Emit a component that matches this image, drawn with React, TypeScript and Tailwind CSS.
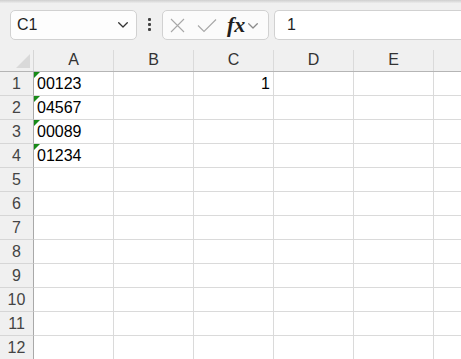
import React from "react";

const cols = ["A", "B", "C", "D", "E"];
const rows = Array.from({ length: 12 }, (_, i) => i + 1);

const cellData: Record<string, { value: string; align: "left" | "right"; flag?: boolean }> = {
  A1: { value: "00123", align: "left", flag: true },
  A2: { value: "04567", align: "left", flag: true },
  A3: { value: "00089", align: "left", flag: true },
  A4: { value: "01234", align: "left", flag: true },
  C1: { value: "1", align: "right" },
};

function Chevron({ className, color }: { className: string; color: string }) {
  return (
    <svg className={className} viewBox="0 0 10 6" fill="none">
      <path d="M0.7 0.7 L5 5 L9.3 0.7" stroke={color} strokeWidth="1.3" strokeLinecap="round" strokeLinejoin="round" />
    </svg>
  );
}

function FormulaBar() {
  return (
    <div className="flex h-[45px] items-start pt-[7px] pl-[10px]">
      {/* Name box */}
      <div className="flex h-[30px] w-[127px] items-center justify-between rounded-[5px] border border-[#d1d1d1] bg-[#fdfdfd] pl-[6px] pr-[8px]">
        <span className="text-[16px] text-[#1f1f1f]">C1</span>
        <Chevron className="h-[6px] w-[10px]" color="#333333" />
      </div>

      {/* Kebab */}
      <div className="flex w-[25px] flex-col items-center gap-[2px] pt-[8px]">
        <span className="h-[3px] w-[3px] rounded-[1px] bg-[#444]" />
        <span className="h-[3px] w-[3px] rounded-[1px] bg-[#444]" />
        <span className="h-[3px] w-[3px] rounded-[1px] bg-[#444]" />
      </div>

      {/* Cancel / Enter / fx */}
      <div className="flex h-[30px] w-[107px] items-center rounded-[5px] border border-[#d1d1d1] bg-[#fbfbfb] pl-[7px]">
        <svg className="h-[15px] w-[15px]" viewBox="0 0 15 15" fill="none">
          <path d="M1 1 L14 14 M14 1 L1 14" stroke="#a8a8a8" strokeWidth="1.1" />
        </svg>
        <svg className="ml-[12px] h-[15px] w-[20px]" viewBox="0 0 20 15" fill="none">
          <path d="M1 7.5 L7 13.5 L19 1.5" stroke="#a8a8a8" strokeWidth="1.1" />
        </svg>
        <span
          className="ml-[10px] text-[22px] leading-none font-semibold italic text-[#1f1f1f]"
          style={{ fontFamily: '"Liberation Serif", "DejaVu Serif", serif' }}
        >
          fx
        </span>
        <Chevron className="ml-[3px] mt-[2px] h-[6px] w-[10px]" color="#8a8a8a" />
      </div>

      {/* Formula input */}
      <div className="ml-[5px] flex h-[30px] flex-1 items-center rounded-l-[5px] border border-r-0 border-[#d1d1d1] bg-white pl-[12px]">
        <span className="text-[16px] text-[#1f1f1f]">1</span>
      </div>
    </div>
  );
}

function HeaderRow() {
  return (
    <div className="flex h-[24px] border-b border-[#b5b5b5] bg-[#f0f0f0]">
      <div className="flex w-[34px] shrink-0">
        <div className="flex flex-1 items-end justify-end pb-[3px] pr-[3px]">
          <svg className="h-[14px] w-[14px]" viewBox="0 0 14 14">
            <path d="M14 0 L14 14 L0 14 Z" fill="#d9d9d9" />
          </svg>
        </div>
        <div className="mt-[2px] w-px bg-[#d6d6d6]" />
      </div>
      {cols.map((c) => (
        <div key={c} className="flex w-[80px] shrink-0">
          <div className="flex flex-1 items-center justify-center text-[16px] text-[#333]">{c}</div>
          <div className="mt-[2px] w-px bg-[#dadada]" />
        </div>
      ))}
      <div className="flex-1" />
    </div>
  );
}

function GridRow({ n }: { n: number }) {
  return (
    <div className="flex h-[24px]">
      <div className="flex w-[34px] shrink-0 items-center justify-center border-r border-b border-r-[#a9a9a9] border-b-[#d6d6d6] bg-[#f0f0f0] text-[16px] text-[#444]">
        {n}
      </div>
      {cols.map((c) => {
        const d = cellData[`${c}${n}`];
        return (
          <div
            key={c}
            className={`relative flex w-[80px] shrink-0 items-center border-r border-b border-[#dadada] bg-white px-[3px] text-[16px] text-black ${
              d?.align === "right" ? "justify-end" : "justify-start"
            }`}
          >
            {d?.flag && (
              <svg className="absolute left-0 top-0 h-[6px] w-[6px]" viewBox="0 0 6 6">
                <path d="M0 0 L6 0 L0 6 Z" fill="#178a17" />
              </svg>
            )}
            {d?.value}
          </div>
        );
      })}
      <div className="flex-1 border-b border-[#dadada] bg-white" />
    </div>
  );
}

export default function App() {
  return (
    <div
      className="h-[359px] w-[461px] overflow-hidden bg-[#f0f0f0]"
      style={{ fontFamily: '"Liberation Sans", Arial, sans-serif' }}
    >
      <div className="h-[3px] bg-gradient-to-b from-[#cfcfcf] to-[#ebebeb]" />
      <FormulaBar />
      <HeaderRow />
      {rows.map((n) => (
        <GridRow key={n} n={n} />
      ))}
    </div>
  );
}
